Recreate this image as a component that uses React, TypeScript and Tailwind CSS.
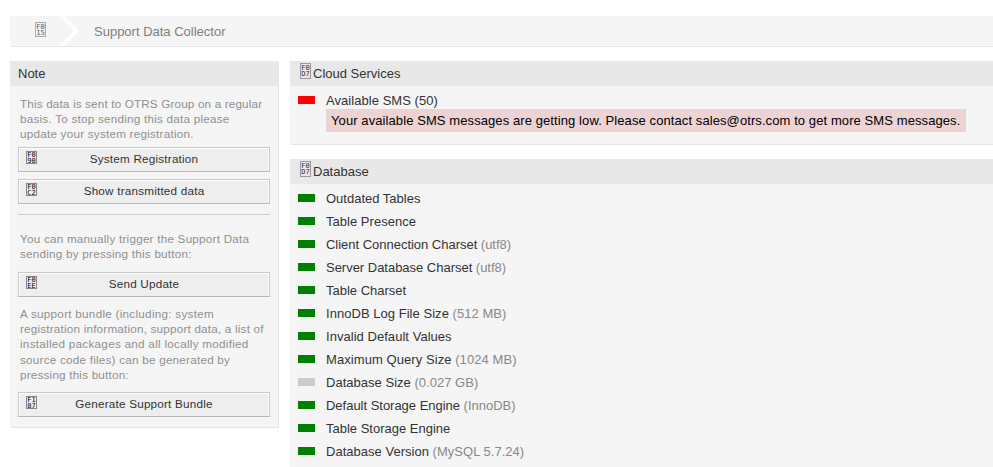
import type { ReactNode } from 'react';

function CodeGlyph({ code, className }: { code: string; className: string }) {
  return (
    <span
      className={`flex w-[11px] shrink-0 items-center justify-center border text-center font-['DejaVu_Sans_Mono',monospace] text-[7px] leading-[6px] break-all ${className}`}
    >
      <span className="w-[9px]">{code}</span>
    </span>
  );
}

function ActionButton({ code, children }: { code: string; children: ReactNode }) {
  return (
    <button className="flex h-[25px] w-[252px] items-start border border-[#c8c8c8] border-b-[#b8b8b8] bg-[#eee] pt-[3px] pl-[7px] text-[11.7px] tracking-[0.21px] text-[#333] shadow-[inset_1px_1px_0_#fff,inset_-1px_0_0_#fff]">
      <CodeGlyph code={code} className="h-[13px] border-[#888] tracking-normal text-black" />
      <span className="mr-[18px] flex-1 leading-[15px]">{children}</span>
    </button>
  );
}

function Note({ children, className }: { children: ReactNode; className: string }) {
  return (
    <p className={`pl-0.5 text-[11.7px] leading-[15.2px] tracking-[0.23px] whitespace-nowrap text-[#909090] ${className}`}>
      {children}
    </p>
  );
}

function SectionHeader({ children }: { children: ReactNode }) {
  return (
    <h2 className="flex h-[25px] items-start bg-[#e8e8e8] pt-0.5 pl-2.5">
      <CodeGlyph code="F0D7" className="h-4 border-[#999] text-[#333]" />
      <span className="pl-0.5 leading-[21px]">{children}</span>
    </h2>
  );
}

const checks = [
  { name: 'Outdated Tables' },
  { name: 'Table Presence', tracking: 'tracking-[0.03px]' },
  { name: 'Client Connection Charset', value: 'utf8', tracking: 'tracking-[-0.02px]' },
  { name: 'Server Database Charset', value: 'utf8', tracking: 'tracking-[-0.02px]' },
  { name: 'Table Charset' },
  { name: 'InnoDB Log File Size', value: '512 MB', tracking: 'tracking-[0.04px]' },
  { name: 'Invalid Default Values', tracking: 'tracking-[0.04px]' },
  { name: 'Maximum Query Size', value: '1024 MB', tracking: 'tracking-[0.07px]' },
  { name: 'Database Size', value: '0.027 GB', unknown: true, tracking: 'tracking-[0.02px]' },
  { name: 'Default Storage Engine', value: 'InnoDB', tracking: 'tracking-[-0.02px]' },
  { name: 'Table Storage Engine' },
  { name: 'Database Version', value: 'MySQL 5.7.24', tracking: 'tracking-[0.02px]' },
];

export default function App() {
  return (
    <div className="h-[467px] w-[993px] overflow-hidden bg-white pt-4 pl-2.5 font-['Liberation_Sans',Arial,sans-serif] text-[13px] text-[#333]">
      <nav className="flex h-[30px] bg-[#f5f5f5] shadow-[1px_1px_0_#e6e6e6]">
        <div className="w-[49px] pt-1.5 pl-[25px]">
          <CodeGlyph code="F015" className="h-[15px] border-[#aaa] text-[#555]" />
        </div>
        <svg className="h-[30px] w-5" viewBox="0 0 20 30">
          <path d="M0 0H5L20 15L5 30H0L15 15Z" fill="#fff" />
        </svg>
        <span className="pl-[15px] leading-[31px] text-[#808080]">Support Data Collector</span>
      </nav>
      <div className="mt-[15px] flex items-start gap-3">
        <aside className="h-[366px] w-[268px] shrink-0 bg-[#f5f5f5] shadow-[1px_1px_0_#e6e6e6]">
          <h2 className="h-[25px] bg-[#e8e8e8] pl-2 leading-[25px]">Note</h2>
          <div className="flex flex-col px-2">
            <Note className="mt-2.5 h-[51px]">
              <span className="tracking-[0.16px]">This data is sent to OTRS Group on a regular</span><br />
              basis. To stop sending this data please<br />
              update your system registration.
            </Note>
            <ActionButton code="F090">System Registration</ActionButton>
            <div className="h-[7px]" />
            <ActionButton code="F0C2">Show transmitted data</ActionButton>
            <hr className="mt-2.5 w-[252px] border-[#ccc]" />
            <Note className="mt-4 h-[41px]">
              You can manually trigger the Support Data<br />
              sending by pressing this button:
            </Note>
            <ActionButton code="F0EE">Send Update</ActionButton>
            <Note className="mt-[9px] h-[86px]">
              <span className="tracking-[0.27px]">A support bundle (including: system</span><br />
              <span className="tracking-[0.2px]">registration information, support data, a list of</span><br />
              <span className="tracking-[0.27px]">installed packages and all locally modified</span><br />
              source code files) can be generated by<br />
              <span className="tracking-[0.2px]">pressing this button:</span>
            </Note>
            <ActionButton code="F187">Generate Support Bundle</ActionButton>
          </div>
        </aside>
        <main className="min-w-0 flex-1">
          <section className="h-[83px] bg-[#f5f5f5] shadow-[1px_1px_0_#e6e6e6]">
            <SectionHeader>Cloud Services</SectionHeader>
            <div className="flex pt-[7px] pl-2">
              <i className="mt-[3px] mr-[11px] h-2 w-[17px] bg-[red]" />
              <div>
                <div className="h-4 leading-[15px] tracking-[0.05px]">Available SMS (50)</div>
                <div className="h-[23px] w-[640px] bg-[#edd3d4] pl-[5px] leading-[23px] tracking-[0.09px] whitespace-nowrap text-black">
                  Your available SMS messages are getting low. Please contact sales@otrs.com to get more SMS messages.
                </div>
              </div>
            </div>
          </section>
          <section className="mt-[15px] h-[340px] bg-[#f5f5f5]">
            <SectionHeader>Database</SectionHeader>
            <ul className="pt-0.5 pl-2">
              {checks.map((c) => (
                <li key={c.name} className="flex h-[23px] gap-[11px] leading-[25px]">
                  <i className={`mt-[8px] h-2 w-[17px] ${c.unknown ? 'bg-[#ccc]' : 'bg-[green]'}`} />
                  <span className={c.tracking}>
                    {c.name} {c.value && <span className="text-[#888]">({c.value})</span>}
                  </span>
                </li>
              ))}
            </ul>
          </section>
        </main>
      </div>
    </div>
  );
}
